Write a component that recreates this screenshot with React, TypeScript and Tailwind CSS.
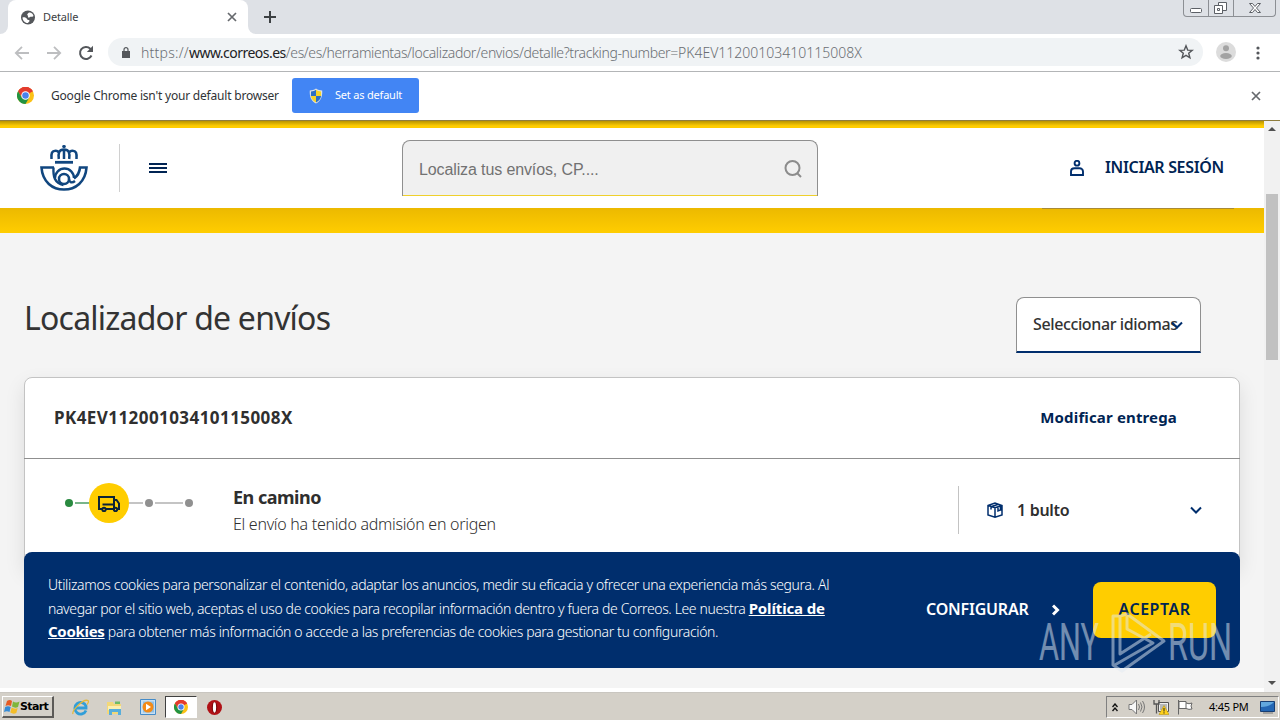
import type { ReactNode } from "react";
import { clsx } from "clsx";

const trackingNumber = "PK4EV11200103410115008X";

function ChromeLogo({ className }: { className?: string }) {
  return (
    <svg viewBox="0 0 24 24" className={className}>
      <circle cx="12" cy="12" r="12" fill="#fbc116" />
      <path d="M12 12 1.6 6A12 12 0 0 1 22.4 6Z" fill="#e33b2e" />
      <path d="M12 6h10.4A12 12 0 0 0 1.6 6L6.8 15Z" fill="#e33b2e" />
      <path d="M1.6 6A12 12 0 0 0 12 24l5.2-9-5.2-3-5.2 3Z" fill="#229342" />
      <circle cx="12" cy="12" r="6" fill="#fff" />
      <circle cx="12" cy="12" r="4.6" fill="#4a82ec" />
    </svg>
  );
}

function ShieldIcon() {
  return (
    <svg viewBox="0 0 14 16" className="h-4 w-3.5">
      <path d="M7 .5C5 2 3 2.4.8 2.5.4 8 2 13 7 15.6 12 13 13.600 8 13.200 2.500 11 2.400 9 2 7 .5Z" fill="#dfe3e4" />
      <path d="M7 1.800C5.500 2.800 4 3.300 2 3.500L1.900 8H7Z" fill="#2c6fc4" />
      <path d="M7 1.800c1.500 1 3 1.500 5 1.700L12.100 8H7Z" fill="#f5d328" />
      <path d="M1.900 8c.4 3 2.200 5 5.100 6.400V8Z" fill="#f5d328" />
      <path d="M12.100 8c-.4 3-2.200 5-5.100 6.400V8Z" fill="#2c6fc4" />
    </svg>
  );
}

function GlobeIcon() {
  return (
    <svg viewBox="0 0 17 17" className="size-[17px]">
      <circle cx="8" cy="8.500" r="7" fill="#54575b" />
      <path d="M9.500 3.500c2 0 3.500 1.500 4 3.500-1 1.500-2.500 0-3.500 1S8 9 8 7.500 6.500 6 7.500 5s1-1.500 2-1.500ZM2.500 8.500c1.500-.5 4 0 4.500 1.500s2 .5 2.500 1.500c.3 1-1 1.500-1.500 2.500-3 .2-5.500-2.500-5.500-5.500Z" fill="#fff" />
    </svg>
  );
}

function Cross({ className }: { className?: string }) {
  return (
    <svg viewBox="0 0 10 10" className={className} fill="none" stroke="#66696d" strokeWidth="1.7">
      <path d="m1 1 8 8M9 1 1 9" />
    </svg>
  );
}

function TabStrip() {
  return (
    <div className="flex h-[34px] bg-[#dee1e6]">
      <div className="flex w-2 shrink-0 items-end bg-white">
        <div className="h-full w-full rounded-br-lg bg-[#dee1e6]" />
      </div>
      <div className="flex w-60 shrink-0 items-center rounded-t-lg bg-white pl-3 pr-[11px]">
        <GlobeIcon />
        <span className="ml-1.5 grow text-[11px] tracking-[-0.15px] text-[#3c4043]">Detalle</span>
        <Cross className="size-[10px]" />
      </div>
      <div className="flex w-2 shrink-0 bg-white">
        <div className="h-full w-full rounded-bl-lg bg-[#dee1e6]" />
      </div>
      <svg viewBox="0 0 12 12" className="ml-2 mt-[11px] size-3" stroke="#3c4043" strokeWidth="2">
        <path d="M6 0v12M0 6h12" />
      </svg>
      <div className="ml-auto mr-1 flex h-[17px] w-[93px] rounded-b border border-t-0 border-[#8c8f94]">
        <svg viewBox="0 0 91 16" className="h-4 w-[91px]" fill="#fff" stroke="#5c6066">
          <path d="M24.500 0v16M49.500 0v16" stroke="#8c8f94" />
          <rect x="6.500" y="8.500" width="11" height="4" rx="1" />
          <path d="M34.500 2.500h8v8h-8z" />
          <path d="M30.500 5.500h8v8h-8z" />
          <path d="M33.500 8.500h2v2h-2z" />
          <path d="m65.500 3.500h3l2.500 3 2.500-3h3l-4 4.500 4 4.500h-3l-2.500-3-2.500 3h-3l4-4.500z" />
        </svg>
      </div>
    </div>
  );
}

function Toolbar() {
  return (
    <div className="flex h-[38px] items-center border-b border-[#b3b5b7] bg-white">
      <svg viewBox="0 0 16 14" className="ml-[14px] h-3.5 w-4" fill="none" stroke="#bdbec0" strokeWidth="1.8">
        <path d="M15 7H2M8 .8 1.800 7 8 13.200" />
      </svg>
      <svg viewBox="0 0 16 14" className="ml-4 h-3.5 w-4" fill="none" stroke="#bdbec0" strokeWidth="1.8">
        <path d="M1 7h13M8 .8 14.200 7 8 13.200" />
      </svg>
      <svg viewBox="0 0 16 16" className="ml-4 size-4" fill="none" stroke="#54575b" strokeWidth="2">
        <path d="M13.500 10.500A6 6 0 1 1 12.300 3.700L13.500 5" />
        <path d="M15 .8V7H8.800Z" fill="#54575b" stroke="none" />
      </svg>
      <div className="-mt-px ml-[14px] flex h-7 w-[1095px] items-center rounded-full bg-[#f0f3f5] pl-[14px] pr-[9px]">
        <svg viewBox="0 0 8 11" className="h-[11px] w-2">
          <path d="M0 4h8v7H0z" fill="#54575b" />
          <path d="M2 4.500V2.700a2 2 0 0 1 4 0v1.800" fill="none" stroke="#54575b" strokeWidth="1.200" />
        </svg>
        <span className="ml-[11px] grow whitespace-nowrap text-[14px] font-light text-[#6a6e73]">
          <span className="tracking-[0.25px]">https://</span>
          <span className="font-normal tracking-[-0.52px] text-[#202124]">www.correos.es</span>
          <span className="tracking-[-0.36px]">/es/es/herramientas/localizador/envios/detalle?tracking-number=</span>
          <span>{trackingNumber}</span>
        </span>
        <svg viewBox="0 0 16 16" className="size-4" fill="none" stroke="#54575b" strokeWidth="1.4">
          <path d="m8 1.800 1.700 4.300 4.500.3-3.500 2.900 1.200 4.500L8 11.300l-3.900 2.500 1.200-4.500L1.800 6.400l4.500-.3z" />
        </svg>
      </div>
      <svg viewBox="0 0 20 20" className="-mt-0.5 ml-[13px] size-5">
        <circle cx="10" cy="10" r="10" fill="#dcdcdc" />
        <circle cx="10" cy="6.200" r="3" fill="#a3a3a3" />
        <ellipse cx="10" cy="14" rx="5.800" ry="3" fill="#a3a3a3" />
      </svg>
      <svg viewBox="0 0 4 14" className="ml-5 h-3.5 w-1" fill="#54575b">
        <circle cx="2" cy="2" r="1.600" />
        <circle cx="2" cy="7" r="1.600" />
        <circle cx="2" cy="12" r="1.600" />
      </svg>
    </div>
  );
}

function InfoBar() {
  return (
    <div className="flex h-12 items-center bg-white pb-px">
      <ChromeLogo className="ml-[17px] size-[17px]" />
      <span className="ml-[17px] w-[241px] whitespace-nowrap text-[12px] tracking-[-0.2px] text-[#303336]">
        Google Chrome isn't your default browser
      </span>
      <button className="flex h-[35px] w-[127px] items-center rounded-[3px] bg-[#4285f4] pl-[17px] text-[11px] tracking-[-0.2px] text-white">
        <ShieldIcon />
        <span className="ml-3 whitespace-nowrap pb-px">Set as default</span>
      </button>
      <Cross className="ml-auto mr-[19px] size-[10px]" />
    </div>
  );
}

function CorreosLogo() {
  return (
    <svg viewBox="0 0 48 46" className="h-[46px] w-12" fill="none" stroke="#10467f">
      <path d="M24 0v3M22.200 1.500h3.600" strokeWidth="1.800" />
      <path d="M11.500 14C11 8 12 5.800 15.500 5.800c2 0 3 1 3.500 2.200M36.500 14c.5-6-.5-8.200-4-8.200-2 0-3 1-3.500 2.200M18.800 14c-.8-6 .2-9.500 5.200-9.500s6 3.500 5.200 9.500M24 4.500V14" strokeWidth="2.500" />
      <path d="M15 17.300h18" strokeWidth="2.800" />
      <path d="M14 22.500H1.500C2.500 37 12.500 44.500 24 44.500S45.500 37 46.500 22.500H40c-.5 5-2.500 8.500-6 11" strokeWidth="2.600" />
      <path d="M13.500 22.500c-.5 9 1 15.500 10 17.500" strokeWidth="2.400" />
      <path d="M15 33a9.500 9.500 0 0 1 19 0M29 34c.3 3.500 3 4.500 6 2" strokeWidth="2.400" />
      <circle cx="24" cy="34" r="5" strokeWidth="2.500" />
    </svg>
  );
}

function SiteHeader() {
  return (
    <header className="flex h-20 shrink-0 items-center bg-white">
      <div className="ml-10">
        <CorreosLogo />
      </div>
      <div className="ml-[31px] h-12 w-px bg-[#d0d0d0]" />
      <button className="ml-[29px] flex w-[18px] flex-col gap-0.5">
        <span className="h-0.5 bg-[#002453]" />
        <span className="h-0.5 bg-[#002453]" />
        <span className="h-0.5 bg-[#002453]" />
      </button>
      <div className="ml-[235px] flex h-14 w-[416px] items-center rounded-t-[8px] border-x border-t border-[#8f8f8f] bg-[#f0f0f0]">
        <div className="flex h-full grow items-center border-b border-[#efd02c] pl-4 pr-[15px]">
          <span className="grow pt-[3px] font-['Liberation_Sans',sans-serif] text-[16px] tracking-[-0.12px] text-[#727272]">
            Localiza tus envíos, CP....
          </span>
          <svg viewBox="0 0 18 18" className="mt-0.5 size-[18px]" fill="none" stroke="#8c8c8c" strokeWidth="2">
            <circle cx="8.500" cy="8" r="7" />
            <path d="m13 13 4 4" />
          </svg>
        </div>
      </div>
      <svg viewBox="0 0 14 16" className="ml-[252px] h-4 w-3.5" fill="none" stroke="#002e6d" strokeWidth="1.900">
        <circle cx="7" cy="3.200" r="2.400" />
        <path d="M1 15v-3.500C1 9.500 2.500 8.300 4.500 8.300h5c2 0 3.500 1.200 3.500 3.200V15Z" />
      </svg>
      <span className="ml-[21px] whitespace-nowrap pb-0.5 text-[16px] font-semibold tracking-[-0.34px] text-[#002453]">INICIAR SESIÓN</span>
    </header>
  );
}

function Chevron({ className }: { className?: string }) {
  return (
    <svg viewBox="0 0 12 8" className={className} fill="none" stroke="#002e6d" strokeWidth="2">
      <path d="m1 1.500 5 5 5-5" />
    </svg>
  );
}

function StepLine({ done }: { done?: boolean }) {
  return <span className={clsx("h-0.5 grow", done ? "bg-[#79b58a]" : "bg-[#c4c4c4]")} />;
}

function Steps() {
  return (
    <div className="flex h-10 w-[129px] items-center">
      <span className="size-2 rounded-full bg-[#2a8a40]" />
      <span className="flex w-4 pl-0.5"><StepLine done /></span>
      <span className="flex size-10 items-center justify-center rounded-full bg-[#ffcd00]">
        <svg viewBox="0 0 22 16" className="mt-0.5 h-4 w-[22px]" fill="none" stroke="#0b2338" strokeWidth="2">
          <path d="M4 13H1V1h15v12H8M16 4h2.500L21 7.500V13h-1.500M4.500 8.500H16" />
          <circle cx="6" cy="13.500" r="1.700" />
          <circle cx="17.500" cy="13.500" r="1.700" />
        </svg>
      </span>
      <span className="flex w-4 pr-0.5"><StepLine /></span>
      <span className="size-2 rounded-full bg-[#909090]" />
      <span className="flex w-8 px-0.5"><StepLine /></span>
      <span className="size-2 rounded-full bg-[#909090]" />
    </div>
  );
}

function ShipmentCard() {
  return (
    <section className="h-[190px] rounded-[8px] border border-[#c3c3c3] bg-white shadow-[0_8px_20px_rgba(0,0,0,0.1)]">
      <div className="-mx-px flex h-[81px] items-center justify-between border-b border-[#8f8f8f] pl-[30px] pr-[63px]">
        <h2 className="text-[17px] font-bold tracking-[0.43px] text-[#2f2f2f]">{trackingNumber}</h2>
        <a className="pb-0.5 text-[15px] font-bold tracking-[0.15px] text-[#002453]">Modificar entrega</a>
      </div>
      <div className="flex pl-10 pt-6">
        <Steps />
        <div className="ml-[39px] w-[725px] whitespace-nowrap">
          <h3 className="text-[18px] font-bold leading-7 tracking-[-0.5px] text-[#2f2f2f]">En camino</h3>
          <p className="text-[16px] font-light leading-[26px] tracking-[-0.29px] text-[#2f2f2f]">El envío ha tenido admisión en origen</p>
        </div>
        <div className="mt-[3px] flex h-12 items-center border-l border-[#c3c3c3] pl-7">
          <svg viewBox="0 0 16 16" className="size-4" fill="none" stroke="#002e6d" strokeWidth="1.500">
            <path d="M1 3.500 8 1l7 2.500V13l-7 2.200L1 13ZM1 3.500l7 2.300 7-2.300M8 5.800V15M4.500 4.500 11.500 2.300M4 4.500v3M11 5v4l2.500-1V4" />
          </svg>
          <span className="ml-3.5 w-[173px] text-[16px] font-semibold tracking-[-0.3px] text-[#2f2f2f]">1 bulto</span>
          <Chevron className="h-2 w-3" />
        </div>
      </div>
    </section>
  );
}

function CookieBanner() {
  return (
    <div className="absolute left-6 right-6 top-[431px] flex h-[116px] rounded-[8px] bg-[#002e6d] text-white">
      <p className="ml-6 mt-[21px] w-[800px] whitespace-nowrap text-[14px] font-light leading-[23.500px]">
        <span className="tracking-[-0.345px]">Utilizamos cookies para personalizar el contenido, adaptar los anuncios, medir su eficacia y ofrecer una experiencia más segura. Al</span>
        <br />
        <span className="tracking-[-0.37px]">navegar por el sitio web, aceptas el uso de cookies para recopilar información dentro y fuera de Correos. Lee nuestra </span>
        <a className="text-[15px] font-bold tracking-[-0.14px] underline">Política de</a>
        <br />
        <a className="text-[15px] font-bold tracking-[-0.3px] underline">Cookies</a>
        <span className="tracking-[-0.355px]"> para obtener más información o accede a las preferencias de cookies para gestionar tu configuración.</span>
      </p>
      <div className="ml-auto mr-6 flex items-center text-[16px] font-semibold">
        <button className="flex items-center">
          <span className="w-[126px] pb-0.5 text-left tracking-[-0.2px]">CONFIGURAR</span>
          <svg viewBox="0 0 8 12" className="h-3 w-2" fill="none" stroke="#fff" strokeWidth="3">
            <path d="m1 1.500 4.500 4.500L1 10.500" />
          </svg>
        </button>
        <button className="ml-[33px] h-14 w-[123px] rounded-[8px] bg-[#ffcd00] pb-0.5 tracking-[0.5px] text-[#002453]">ACEPTAR</button>
      </div>
    </div>
  );
}

function Watermark() {
  return (
    <svg viewBox="0 0 205 70" className="absolute left-[1035px] top-[607px] h-[70px] w-[205px] opacity-50" fill="#e4ebf3">
      <text x="4" y="53" textLength="60" lengthAdjust="spacingAndGlyphs" className="font-[Roboto,sans-serif] text-[52px] font-normal">ANY</text>
      <text x="133" y="53" textLength="64" lengthAdjust="spacingAndGlyphs" className="font-[Roboto,sans-serif] text-[52px] font-normal">RUN</text>
      <g fill="none" stroke="#e4ebf3" strokeWidth="3" strokeLinejoin="round">
        <path d="M85 9h-7v49l9 6 42-30-37-27-7 2v38l31-20" />
        <path d="M92 9v13l26 14-40 23" />
      </g>
    </svg>
  );
}

function ScrollBar() {
  return (
    <div className="flex w-4 shrink-0 flex-col items-center bg-[#f1f1f1]">
      <svg viewBox="0 0 8 4" className="mt-[6px] h-1 w-2" fill="#505050"><path d="M4 0 8 4H0Z" /></svg>
      <div className="mt-[63px] h-[166px] w-3 bg-[#c1c1c1]" />
      <svg viewBox="0 0 8 4" className="mb-[3px] mt-auto h-1 w-2" fill="#505050"><path d="M0 0h8L4 4Z" /></svg>
    </div>
  );
}

function WebPage() {
  return (
    <div className="relative flex h-[567px] overflow-hidden bg-[#f4f4f4] font-['Noto_Sans',sans-serif]">
      <div className="relative flex w-[1264px] shrink-0 flex-col overflow-hidden">
        <div className="h-[7px] shrink-0 bg-linear-to-b from-[#b99400] to-[#ffcd00] to-70%" />
        <SiteHeader />
        <div className="flex h-[25px] shrink-0 items-start justify-end bg-linear-to-b from-[#ecb900] to-[#ffcd00] pr-[30px]">
          <div className="h-px w-[192px] bg-[#a98a35]" />
        </div>
        <main className="px-6">
          <div className="flex justify-between pt-16">
            <h1 className="text-[32px] leading-[42px] tracking-[-0.78px] text-[#333]">Localizador de envíos</h1>
            <button className="mr-[39px] flex h-14 w-[185px] items-center rounded-t-[8px] border border-b-2 border-[#8f8f8f] border-b-[#002e6d] bg-white pl-4 text-[16px] font-medium text-[#333]">
              <span className="w-[138px] shrink-0 whitespace-nowrap pb-px text-left tracking-[-0.38px]">Seleccionar idiomas</span>
              <Chevron className="h-2 w-3 shrink-0" />
            </button>
          </div>
          <div className="mt-6">
            <ShipmentCard />
          </div>
        </main>
        <CookieBanner />
      </div>
      <ScrollBar />
    </div>
  );
}

function TaskItem({ children, active }: { children: ReactNode; active?: boolean }) {
  return (
    <div
      className={clsx(
        "flex h-[22px] items-center justify-center",
        active ? "w-8 border border-b-white border-l-[#404040] border-r-white border-t-[#404040] bg-white" : "w-[34px]"
      )}
    >
      {children}
    </div>
  );
}

function WindowsFlag() {
  return (
    <svg viewBox="0 0 16 16" className="size-4 shrink-0">
      <path d="M3 2q3-2 5 0L7 7Q4 5.500 1.500 7Z" fill="#e65b24" />
      <path d="M9 2.500q3 2 6.500 0L14 8q-3 1.500-6-.5Z" fill="#7fb63c" />
      <path d="M1.200 8Q4 6.500 6.700 8l-1.200 5Q3 11.500 0 13Z" fill="#358bd6" />
      <path d="M7.700 8.500q3 2 6 .5l-1.400 5q-3 1.500-6-.5Z" fill="#f4bd29" />
    </svg>
  );
}

function Taskbar() {
  return (
    <footer className="flex h-7 items-center border-t border-[#c9c6c0] bg-[#d4d0c8] pt-px font-['DejaVu_Sans',sans-serif]">
      <button className="ml-0.5 flex h-[22px] w-[52px] items-center border-b-2 border-l border-r-2 border-t border-[#5c5a57] border-l-white border-t-white pl-px text-[11px] font-bold tracking-[-0.65px] text-black">
        <WindowsFlag />
        <span className="pt-0.5">Start</span>
      </button>
      <div className="ml-[9px] flex items-center">
        <TaskItem>
          <svg viewBox="0 0 17 17" className="size-[17px]" fill="none">
            <path d="M14 11.500A5.800 5.800 0 1 1 14 7v2H4" stroke="#319ed8" strokeWidth="2.800" />
            <path d="M1 15C-.5 12 11-.5 16 1.500c1 .8 0 3-1 4" stroke="#e4b93a" strokeWidth="1.300" />
          </svg>
        </TaskItem>
        <TaskItem>
          <svg viewBox="0 0 17 17" className="size-[17px]">
            <path d="M1 3h6l1 2h7v10H1Z" fill="#f3d878" />
            <path d="M2 7h13v4H2Z" fill="#fbefb1" />
            <path d="M3 16v-6h12v6h-3v-3H6v3Z" fill="#58aedb" />
            <path d="M9 2.500h5V5H9Z" fill="#6fbb65" />
          </svg>
        </TaskItem>
        <TaskItem>
          <svg viewBox="0 0 16 16" className="size-4">
            <path d="M.5.500h15v15H.500Z" fill="#c7dff2" stroke="#448bc8" />
            <path d="M3 2.500h11v11H3Z" fill="#8ebfe4" />
            <circle cx="8" cy="8" r="5.500" fill="#f38a16" />
            <path d="m6 4.800 5 3.200-5 3.200Z" fill="#fff" />
          </svg>
        </TaskItem>
        <TaskItem active>
          <ChromeLogo className="size-3.5" />
        </TaskItem>
        <TaskItem>
          <svg viewBox="0 0 16 16" className="size-[15px]">
            <circle cx="8" cy="8" r="8" fill="#b01116" />
            <ellipse cx="8" cy="8" rx="3" ry="6" fill="#7a090c" />
            <ellipse cx="8" cy="8" rx="1.700" ry="5.500" fill="#fff" />
          </svg>
        </TaskItem>
      </div>
      <div className="ml-auto mr-px flex h-[22px] w-[173px] items-center border border-[#808080] border-b-white border-r-white pl-[5px]">
        <svg viewBox="0 0 6 9" className="h-[9px] w-1.5" fill="none" stroke="#111" strokeWidth="1.400">
          <path d="m.5 4 2.500-3 2.500 3M.5 8 3 5l2.500 3" />
        </svg>
        <svg viewBox="0 0 18 16" className="ml-[10px] h-4 w-[18px]" fill="none" stroke="#777">
          <path d="M1 5.500h3L8.500 1v14L4 10.500H1Z" fill="#f8f8f8" />
          <path d="M10.500 5q2 3 0 6M12.500 3.500q3 4.500 0 9M14.500 2q4 6 0 12" />
        </svg>
        <svg viewBox="0 0 16 16" className="ml-[7px] size-4">
          <path d="M5.500 3.500h10v9h-10z" fill="#eee" stroke="#555" />
          <path d="M7 5h7v6H7z" fill="#b7b9bb" />
          <path d="M1 1v4h5V1M3.500 5v9.500" fill="none" stroke="#555" strokeWidth="1.300" />
          <path d="m11 6.500 5 9H6Z" fill="#ffd11a" stroke="#b08b00" strokeWidth=".5" />
          <path d="M11 9v3.500M11 13.300v1.200" stroke="#222" />
        </svg>
        <svg viewBox="0 0 16 16" className="ml-2 size-4" fill="#fff" stroke="#666">
          <path d="M1.500 1v14.500M2 2.500h7v7H2zM9 4q3 1.500 6 0-2 3 0 6-3 1-6-.5" />
        </svg>
        <span className="ml-4 w-[51px] whitespace-nowrap font-['Noto_Sans',sans-serif] text-[11px] tracking-[-0.25px] text-black">4:45 PM</span>
        <svg viewBox="0 0 15 13" className="h-[13px] w-[15px]">
          <path d="M.5.500h14v10H.500Z" fill="#2467b4" stroke="#183e72" />
          <path d="M1 1h13Q9 6 1 6Z" fill="#62a8de" />
          <path d="M3 12h10" stroke="#777" />
        </svg>
      </div>
    </footer>
  );
}

export default function App() {
  return (
    <div className="relative flex h-[720px] w-[1280px] flex-col overflow-hidden bg-white font-['Noto_Sans',sans-serif]">
      <TabStrip />
      <Toolbar />
      <InfoBar />
      <div className="h-px shrink-0 bg-[#8f7d3d]" />
      <WebPage />
      <div className="flex h-1 shrink-0 justify-end">
        <div className="w-4 bg-[#f1f1f1]" />
      </div>
      <Taskbar />
      <Watermark />
    </div>
  );
}
